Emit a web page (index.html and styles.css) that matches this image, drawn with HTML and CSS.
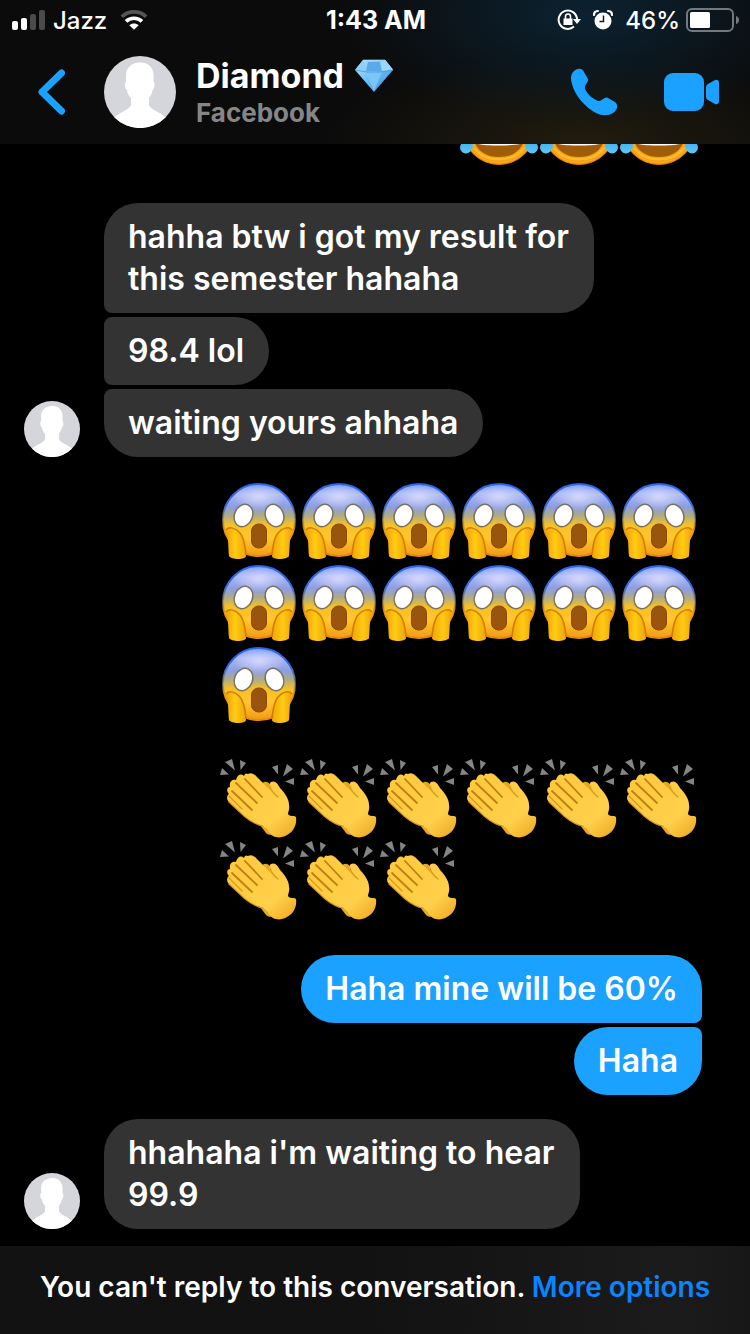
FILE: index.html
```html
<!DOCTYPE html>
<html lang="en">
<head>
<meta charset="utf-8">
<meta name="viewport" content="width=device-width, initial-scale=1">
<title>Diamond</title>
<link rel="stylesheet" href="styles.css">
</head>
<body>
<svg class="defs" aria-hidden="true">
  <defs>
    <linearGradient id="gem" x1="0" y1="0" x2="1" y2="1"><stop offset="0" stop-color="#b5e6fb"/><stop offset=".5" stop-color="#69bdf3"/><stop offset="1" stop-color="#2f86d8"/></linearGradient>
    <linearGradient id="fear" x1="0" y1="0" x2="0" y2="1"><stop offset="0" stop-color="#6f95fa"/><stop offset=".14" stop-color="#a9b6f6"/><stop offset=".32" stop-color="#8c9de0"/><stop offset=".44" stop-color="#b0ab86"/><stop offset=".56" stop-color="#f5c026"/><stop offset=".75" stop-color="#ffc62b"/><stop offset="1" stop-color="#f29a16"/></linearGradient>
    <linearGradient id="rim" x1="0" y1="0" x2="0" y2="1"><stop offset="0" stop-color="#1d5cf2"/><stop offset=".28" stop-color="#356ce0"/><stop offset=".5" stop-color="#a69767" stop-opacity=".6"/><stop offset=".65" stop-color="#eb9710"/><stop offset="1" stop-color="#e68a0c"/></linearGradient>
    <radialGradient id="shine"><stop offset="0" stop-color="#e4e4ff" stop-opacity=".75"/><stop offset="1" stop-color="#e4e4ff" stop-opacity="0"/></radialGradient>
    <linearGradient id="palm" x1="0" y1="0" x2="1" y2="0"><stop offset="0" stop-color="#f0a00b"/><stop offset=".45" stop-color="#ffcb12"/><stop offset="1" stop-color="#f0a606"/></linearGradient>
    <linearGradient id="skin" x1="0" y1="0" x2="1" y2="1"><stop offset="0" stop-color="#ffc83a"/><stop offset=".7" stop-color="#ffd04b"/><stop offset="1" stop-color="#eda51f"/></linearGradient>
    <linearGradient id="tear" x1="0" y1="0" x2="0" y2="1"><stop offset="0" stop-color="#2a9fe8"/><stop offset="1" stop-color="#5cc8fb"/></linearGradient>
  </defs>
  <symbol id="person" viewBox="0 0 72 72">
    <circle cx="36" cy="36" r="36" fill="#d5d6dc"/>
    <path fill="#fff" d="M36 6.500C42 6 49.500 10 49.500 19V26C51.500 27 50.500 33 48.500 34C48 38 46.500 40 45 42V49C46 54 57 56 61.500 61.500A36 36 0 0 1 10.500 61.500C15 56 26 54 27 49V42C25 40 23.500 38 23 34C21 33 20 27 22 26V19C22 11 29 6.500 36 6.500Z"/>
  </symbol>
  <symbol id="scream" viewBox="0 0 80 82">
    <circle cx="39" cy="40" r="36" fill="url(#fear)" stroke="url(#rim)" stroke-width="2"/>
    <ellipse cx="39" cy="17" rx="26" ry="14" fill="url(#shine)"/>
    <ellipse cx="23.500" cy="35.500" rx="9" ry="11.500" transform="rotate(22 23.500 35.500)" fill="#fff" stroke="#77735f" stroke-width="1.500"/>
    <ellipse cx="54.500" cy="35.500" rx="9" ry="11.500" transform="rotate(-22 54.500 35.500)" fill="#fff" stroke="#77735f" stroke-width="1.500"/>
    <rect x="31.500" y="44" width="15" height="24" rx="7" fill="#9a540b" stroke="#87490a"/>
    <path fill="#000" d="M3 82V70L27 77L31 82ZM75 82V70L51 77L47 82Z"/>
    <g id="hand"><path d="M6 50C9 46 16 48 20 53C26 60 25 68 26 76C26 80 11 80 9 76C8 68 9 60 6 50Z" fill="url(#palm)"/>
    <path d="M6 50C9 46 16 48 20 53C25 59 25 67 26 75" fill="none" stroke="#cc7205" stroke-width="1.500" opacity=".85"/></g>
    <use href="#hand" transform="matrix(-1 0 0 1 78 0)"/>
  </symbol>
  <symbol id="clap" viewBox="0 0 80 82">
    <path fill="#858585" d="M5 5L12 2L15 13.500ZM20 3L26 6L20.500 13ZM2 11L9 17.500L0 18ZM52 10L58 8L58 17.500ZM67 7L73 12L63 19.500ZM65 24.500L74 21V28Z"/>
    <path fill="#e9a623" d="M41 29C42 24 48 23 50 28L56 40L42 44ZM40 68L46 76C49 79 54 78 55 74L52 67Z"/>
    <path fill="url(#skin)" d="M28 17C31 15 34 17 36 19L50 33L54 38C51 33 47 28 51 25C55 23 58 27 60 31C66 37 69 43 69 48C70 52 68 55 68 57C70 60 74 58 76 60C77 67 74 73 70 76C65 80 59 82 53 79C49 77 48 71 43 69C34 67 29 63 24 59L9 45C6 42 7 38 9 37C6 34 7 30 10 30C9 25 12 22 16 23C17 18 21 16 24 19C25 16 26 16 28 17Z"/>
    <path fill="none" stroke="#bf7f12" stroke-width="1.800" stroke-linecap="round" d="M25 22L42 40M16 26L37 46M12 34L32 53"/>
    <path fill="none" stroke="#dc9618" stroke-width="1.200" stroke-linecap="round" d="M50 29C51 33 54 37 58 40M9 39L22 52M9 45L24 59C29 63 35 68 43 69"/>
  </symbol>
  <symbol id="joy" viewBox="0 0 80 82">
    <circle cx="39" cy="41" r="36.500" fill="#f7a51b" stroke="#da7c0a"/>
    <path fill="#a05c08" d="M12 41H66C66 61 55 70 39 70S12 61 12 41Z"/>
    <path fill="#fff" d="M18 45H60V57C51 59 27 59 18 57Z"/>
    <path fill="none" stroke="#ffbd2b" stroke-width="2" d="M14 61C25 76 53 76 64 61"/>
    <path fill="url(#tear)" d="M14 46C12 54 14 60 11 64C7 68 1 67 0 61C0 54 8 53 14 46ZM64 46C66 54 64 60 67 64C71 68 77 67 78 61C78 54 70 53 64 46Z"/>
  </symbol>
</svg>

<header class="top">
  <div class="status">
    <div class="status-side">
      <svg width="34" height="22" viewBox="0 0 34 22"><rect y="12" width="6" height="9" rx="2" fill="#fff"/><rect x="9" y="9" width="6" height="12" rx="2" fill="#fff"/><rect x="18" y="5" width="6" height="16" rx="2" fill="#4b4b4b"/><rect x="27" y="1" width="6" height="20" rx="2" fill="#4b4b4b"/></svg>
      <span class="carrier">Jazz</span>
      <svg width="28" height="22" viewBox="0 0 30 22" fill="none" stroke-width="4"><path stroke="#555" d="M2 7.500C9 .5 21 .5 28 7.500"/><path stroke="#fff" d="M6.500 12.500C11 8 19 8 23.500 12.500"/><path fill="#fff" d="M10 16.500C13 14 17 14 20 16.500L15 21.500Z"/></svg>
    </div>
    <time class="clock">1:43 AM</time>
    <div class="status-side status-right">
      <svg width="24" height="22" viewBox="0 0 24 22" fill="none" stroke="#fff" stroke-width="2"><path d="M20 10A9.200 9.200 0 1 0 17 17.500"/><path fill="#fff" stroke="none" d="M16 10H24L20 15ZM6.500 9.500H15.500V16H6.500Z"/><path d="M8.500 10V7.500A2.500 2.500 0 0 1 13.500 7.500V10" stroke-width="1.600"/></svg>
      <svg width="20" height="22" viewBox="0 0 20 22"><circle cx="10" cy="12" r="8.500" fill="#fff"/><path d="M1 6Q1 2 5 2M19 6Q19 2 15 2" fill="none" stroke="#fff" stroke-width="2.200" stroke-linecap="round"/><path d="M10.500 6.500V12.500H6.500" fill="none" stroke="#0b1b26" stroke-width="1.500"/></svg>
      <span class="battery">46%<svg width="54" height="24" viewBox="0 0 54 24"><rect x="1" y="1" width="46" height="22" rx="5" fill="none" stroke="#73797d" stroke-width="2"/><rect x="4" y="4" width="20" height="16" rx="1.500" fill="#fff"/><path d="M50 8Q53 9 53 12T50 16Z" fill="#73797d"/></svg></span>
    </div>
  </div>
  <div class="bar">
    <button class="icon back" aria-label="Back"><svg width="28" height="46" viewBox="0 0 28 46"><path d="M24.500 4L5 23L24.500 42" fill="none" stroke="#1ba1ff" stroke-width="7" stroke-linecap="round" stroke-linejoin="round"/></svg></button>
    <svg class="portrait"><use href="#person"/></svg>
    <div class="who">
      <h1 class="name">Diamond
        <svg width="40" height="36" viewBox="0 0 40 34" role="img" aria-label="gem"><path fill="url(#gem)" d="M9 1H31L39 11L20 33L1 11Z"/><path fill="#8fd0f8" d="M9 1L14 12L1 11Z"/><path fill="#5ba9ea" d="M14 3H26L28 12H12Z"/><path fill="#9ad5fa" d="M31 1L39 11L28 12L26 3Z"/><path fill="#7cc6f7" d="M12 13H28L20 32Z"/><path fill="none" stroke="#c3e9fd" stroke-width=".6" d="M9 1H31L39 11"/><path fill="none" stroke="#4795dc" stroke-width=".8" d="M1 11L13 13H27L39 11"/></svg>
      </h1>
      <p class="network">Facebook</p>
    </div>
    <button class="icon" aria-label="Call"><svg width="48" height="48" viewBox="0 0 48 48"><path fill="#1ba1ff" d="M4 3C8 0 12 0 14 4L18 11C19 14 14 17 15 21C18 27 24 32 29 33C32 33 35 28 38 30L45 34C49 37 47 43 43 45C38 48 32 48 26 45C15 39 5 28 2 16C0 10 1 6 4 3Z"/></svg></button>
    <button class="icon" aria-label="Video call"><svg width="56" height="38" viewBox="0 0 56 38" fill="#1ba1ff"><rect width="40" height="38" rx="9"/><path d="M42 14Q42 12 44 11L51 7Q55 6 55 10V28Q55 32 51 31L44 27Q42 26 42 24Z"/></svg></button>
  </div>
</header>

<main class="thread">
  <div class="emoji cut" role="img" aria-label="Tears of joy, 3 times"><svg><use href="#joy"/></svg><svg><use href="#joy"/></svg><svg><use href="#joy"/></svg></div>

  <section class="row first">
    <svg class="avatar"><use href="#person"/></svg>
    <div class="stack">
      <p class="bubble opens">hahha btw i got my result for<br>this semester hahaha</p>
      <p class="bubble mid">98.4 lol</p>
      <p class="bubble closes">waiting yours ahhaha</p>
    </div>
  </section>

  <div class="emoji screams" role="img" aria-label="Screaming face, 13 times"><svg><use href="#scream"/></svg><svg><use href="#scream"/></svg><svg><use href="#scream"/></svg><svg><use href="#scream"/></svg><svg><use href="#scream"/></svg><svg><use href="#scream"/></svg><svg><use href="#scream"/></svg><svg><use href="#scream"/></svg><svg><use href="#scream"/></svg><svg><use href="#scream"/></svg><svg><use href="#scream"/></svg><svg><use href="#scream"/></svg><svg><use href="#scream"/></svg></div>

  <div class="emoji claps" role="img" aria-label="Clapping hands, 9 times"><svg><use href="#clap"/></svg><svg><use href="#clap"/></svg><svg><use href="#clap"/></svg><svg><use href="#clap"/></svg><svg><use href="#clap"/></svg><svg><use href="#clap"/></svg><svg><use href="#clap"/></svg><svg><use href="#clap"/></svg><svg><use href="#clap"/></svg></div>

  <section class="stack mine">
    <p class="bubble opens">Haha mine will be 60%</p>
    <p class="bubble closes">Haha</p>
  </section>

  <section class="row">
    <svg class="avatar"><use href="#person"/></svg>
    <div class="stack">
      <p class="bubble">hhahaha i'm waiting to hear<br>99.9</p>
    </div>
  </section>
</main>

<footer class="notice">
  <p>You can't reply to this conversation. <a href="#options">More options</a></p>
</footer>
</body>
</html>
```
FILE: styles.css
```css
* { box-sizing: border-box; }
body, h1, p { margin: 0; }
svg { display: block; flex: none; }

body {
  min-height: 100vh;
  display: flex;
  flex-direction: column;
  background: #000;
  color: #fff;
  font-family: Inter, "Liberation Sans", sans-serif;
  font-weight: 600;
}

.defs { position: absolute; width: 0; height: 0; }

.top {
  height: 144px;
  display: flex;
  flex-direction: column;
  background:
    radial-gradient(ellipse 240px 110px at 78% 10%, #0b2231, transparent),
    radial-gradient(ellipse 260px 90px at 78% 100%, #211c0e, transparent),
    #0b0b0b;
}

.status {
  height: 40px;
  padding: 0 10px 0 12px;
  display: grid;
  grid-template-columns: 1fr auto 1fr;
  align-items: center;
  font-size: 24px;
  font-weight: 500;
}
.status-side { display: flex; align-items: center; }
.status-right { justify-content: flex-end; gap: 12px; }
.carrier { margin: 0 13px 0 7px; }
.clock { font-size: 25px; font-weight: 700; }
.battery { display: flex; align-items: center; gap: 6px; }

.bar {
  height: 104px;
  padding: 0 30px 0 37px;
  display: flex;
  align-items: center;
}
.icon { padding: 0; border: 0; background: none; cursor: pointer; }
.icon + .icon { margin-left: 46px; }
.back { margin-right: 39px; }
.portrait { width: 72px; height: 72px; }
.who { flex: 1; margin-left: 20px; padding-top: 2px; }
.name {
  display: flex;
  align-items: center;
  gap: 10px;
  font-size: 34px;
  line-height: 40px;
  font-weight: 700;
}
.network {
  font-size: 26px;
  line-height: 34px;
  font-weight: 700;
  color: #868686;
}

.thread { flex: 1; display: flex; flex-direction: column; }

.emoji {
  width: 480px;
  margin-right: 50px;
  align-self: flex-end;
  display: flex;
  flex-wrap: wrap;
}
.emoji svg { width: 80px; height: 82px; }
.cut {
  height: 25px;
  overflow: hidden;
  flex-wrap: nowrap;
  justify-content: flex-end;
  align-items: flex-end;
}
.screams { margin-top: 23px; }
.claps { margin-top: 31px; }

.row { margin: 24px 24px 0; display: flex; align-items: flex-end; gap: 24px; }
.first { margin-top: 34px; }
.avatar { width: 56px; height: 56px; }
.stack { display: flex; flex-direction: column; align-items: flex-start; gap: 4px; }
.mine { margin: 34px 48px 0; align-items: flex-end; }

.bubble {
  padding: 13px 25px 13px 24px;
  border-radius: 34px;
  background: #333;
  font-size: 32px;
  line-height: 42px;
}
.opens { border-bottom-left-radius: 8px; }
.mid { border-top-left-radius: 8px; border-bottom-left-radius: 8px; }
.closes { border-top-left-radius: 8px; }
.mine .bubble { padding: 13px 24px; background: #1ba1ff; }
.mine .opens { border-radius: 34px 34px 8px 34px; }
.mine .closes { border-radius: 34px 8px 34px 34px; }

.notice {
  min-height: 88px;
  padding: 21px 24px 27px;
  background: linear-gradient(90deg, #121212 50%, #1b1b1b 90%, #171717);
  text-align: center;
  font-size: 28px;
  line-height: 40px;
}
.notice a { color: #0a84ff; text-decoration: none; }
```
